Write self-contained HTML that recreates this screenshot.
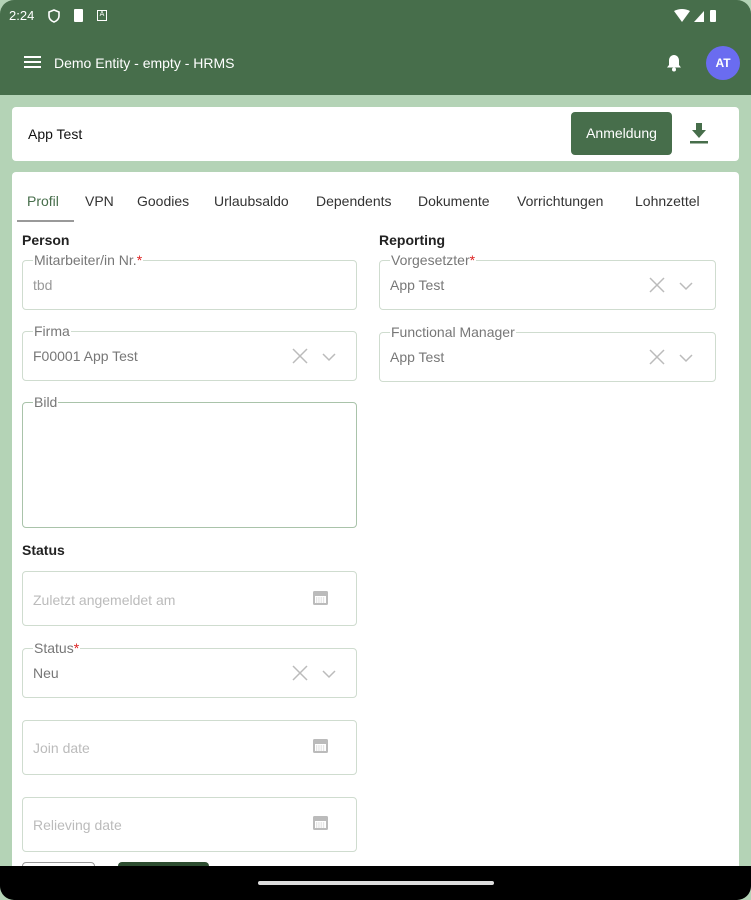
<!DOCTYPE html>
<html><head><meta charset="utf-8"><style>
*{box-sizing:border-box;margin:0;padding:0}
body{width:751px;height:900px;overflow:hidden;background:#b4d3b6;font-family:"Liberation Sans",sans-serif;position:relative}
.top{position:absolute;left:0;top:0;width:751px;height:95px;background:#476e4b;border-radius:14px 14px 0 0;color:#fff}
.card{position:absolute;background:#fff;border-radius:4px}
.f{position:absolute;border:1px solid #cfdccf;border-radius:4px;height:50px}
.lab{position:absolute;top:-9px;left:10px;background:#fff;font-size:14px;color:#777;padding:0 1px;line-height:16px}
.lab b{color:#d22;font-weight:normal}
.val{position:absolute;left:10px;top:16px;font-size:14px;color:#777}
.ph{position:absolute;left:10px;font-size:14px;color:#bbb}
.h{position:absolute;font-size:14px;font-weight:bold;color:#222}
.tab{position:absolute;top:193px;font-size:14px;color:#333}
svg{position:absolute}
</style></head><body>
<div class="top">
<div style="position:absolute;left:9px;top:8px;font-size:13px">2:24</div>
<svg style="left:48px;top:9px" width="12" height="14" viewBox="0 0 12 14"><path d="M6 1L1 3v4c0 3 2.5 5 5 6 2.5-1 5-3 5-6V3z" fill="none" stroke="#fff" stroke-width="1.6"/></svg>
<div style="position:absolute;left:74px;top:9px;width:9px;height:13px;background:#fff;border-radius:1px"></div>
<div style="position:absolute;left:97px;top:10px;width:10px;height:11px;border:1.5px solid #fff;font-size:7px;text-align:center;line-height:8px">A</div>
<svg style="left:674px;top:9px" width="48" height="14" viewBox="0 0 48 14"><path d="M0 2Q8-2 16 2L8 13z" fill="#fff"/><path d="M20 13L30 2v11z" fill="#fff"/><rect x="36" y="1" width="6" height="12" rx="1" fill="#fff"/></svg>
<svg style="left:24px;top:56px" width="17" height="13"><rect y="0" width="17" height="2" fill="#fff"/><rect y="5" width="17" height="2" fill="#fff"/><rect y="10" width="17" height="2" fill="#fff"/></svg>
<div style="position:absolute;left:54px;top:55px;font-size:14px">Demo Entity - empty - HRMS</div>
<svg style="left:666px;top:54px" width="16" height="18" viewBox="0 0 16 18"><path d="M8 1c-3 0-5 2.5-5 5.5V11l-2 2.5h14L13 11V6.5C13 3.5 11 1 8 1z" fill="#fff"/><circle cx="8" cy="15.5" r="2" fill="#fff"/></svg>
<div style="position:absolute;left:706px;top:46px;width:34px;height:34px;border-radius:50%;background:#6a6cf0;font-size:12px;font-weight:bold;text-align:center;line-height:34px">AT</div>
</div>
<div class="card" style="left:12px;top:107px;width:727px;height:54px">
<div style="position:absolute;left:16px;top:19px;font-size:14px;color:#111">App Test</div>
<div style="position:absolute;left:559px;top:5px;width:101px;height:43px;background:#476e4b;border-radius:4px;color:#fff;font-size:14px;text-align:center;line-height:43px">Anmeldung</div>
<svg style="left:677px;top:15px" width="20" height="22" viewBox="0 0 20 22"><path d="M7 1h6v7h4l-7 8-7-8h4z" fill="#476e4b"/><rect x="1" y="19" width="18" height="2.5" fill="#476e4b"/></svg>
</div>
<div class="card" style="left:12px;top:172px;width:727px;height:720px"></div>
<div class="tab" style="left:27px;color:#476e4b">Profil</div>
<div style="position:absolute;left:17px;top:220px;width:57px;height:2px;background:#999"></div>
<div class="tab" style="left:85px">VPN</div>
<div class="tab" style="left:137px">Goodies</div>
<div class="tab" style="left:214px">Urlaubsaldo</div>
<div class="tab" style="left:316px">Dependents</div>
<div class="tab" style="left:418px">Dokumente</div>
<div class="tab" style="left:517px">Vorrichtungen</div>
<div class="tab" style="left:635px">Lohnzettel</div>
<div class="h" style="left:22px;top:232px">Person</div>
<div class="h" style="left:379px;top:232px">Reporting</div>
<div class="h" style="left:22px;top:542px">Status</div>
<div class="f" style="left:22px;top:260px;width:335px"><div class="lab">Mitarbeiter/in Nr.<b>*</b></div><div class="val" style="color:#999">tbd</div></div>
<div class="f" style="left:22px;top:331px;width:335px"><div class="lab">Firma</div><div class="val">F00001 App Test</div></div>
<div class="f" style="left:22px;top:402px;width:335px;height:126px;border-color:#a9c3aa"><div class="lab">Bild</div></div>
<div class="f" style="left:379px;top:260px;width:337px"><div class="lab">Vorgesetzter<b>*</b></div><div class="val">App Test</div></div>
<div class="f" style="left:379px;top:332px;width:337px"><div class="lab">Functional Manager</div><div class="val">App Test</div></div>
<div class="f" style="left:22px;top:571px;width:335px;height:55px"><div class="ph" style="top:20px">Zuletzt angemeldet am</div></div>
<div class="f" style="left:22px;top:648px;width:335px"><div class="lab">Status<b>*</b></div><div class="val">Neu</div></div>
<div class="f" style="left:22px;top:720px;width:335px;height:55px"><div class="ph" style="top:19px">Join date</div></div>
<div class="f" style="left:22px;top:797px;width:335px;height:55px"><div class="ph" style="top:19px">Relieving date</div></div>
<svg width="0" height="0"><defs><g id="xv"><path d="M1 1l14 14M15 1L1 15" stroke="#bbb" stroke-width="1.5"/><path d="M31 6l6 6 6-6" stroke="#bbb" stroke-width="1.5" fill="none"/></g><g id="cal"><rect x="1" y="2" width="15" height="14" rx="1.5" fill="#bbb"/><rect x="3" y="7" width="11" height="7" fill="#fff"/><path d="M4 9h9M4 11h9M4 13h9" stroke="#bbb" stroke-width="0.8" stroke-dasharray="1.3 1"/></g></defs></svg>
<svg style="left:292px;top:348px" width="46" height="18"><use href="#xv"/></svg>
<svg style="left:649px;top:277px" width="46" height="18"><use href="#xv"/></svg>
<svg style="left:649px;top:349px" width="46" height="18"><use href="#xv"/></svg>
<svg style="left:292px;top:665px" width="46" height="18"><use href="#xv"/></svg>
<svg style="left:312px;top:589px" width="18" height="18"><use href="#cal"/></svg>
<svg style="left:312px;top:737px" width="18" height="18"><use href="#cal"/></svg>
<svg style="left:312px;top:814px" width="18" height="18"><use href="#cal"/></svg>
<div style="position:absolute;left:22px;top:862px;width:73px;height:10px;border:1px solid #999;border-radius:4px"></div>
<div style="position:absolute;left:118px;top:862px;width:91px;height:10px;background:#2d4d30;border-radius:4px"></div>
<div style="position:absolute;left:0;top:866px;width:751px;height:34px;background:#000;border-radius:0 0 14px 14px"></div>
<div style="position:absolute;left:258px;top:881px;width:236px;height:4px;background:#ddd;border-radius:2px"></div>
</body></html>
